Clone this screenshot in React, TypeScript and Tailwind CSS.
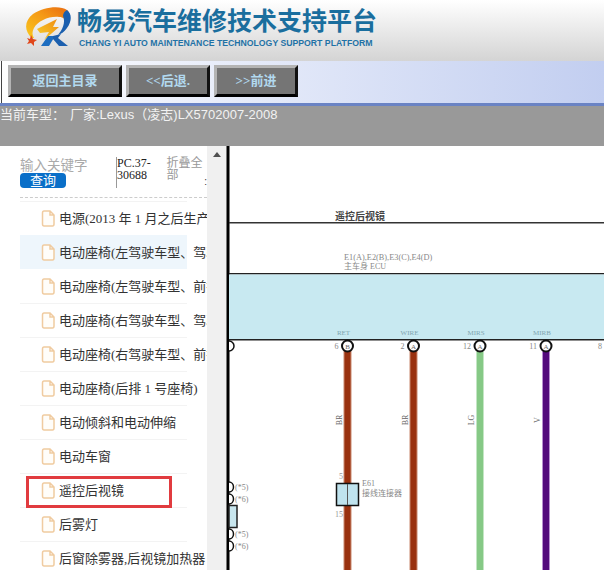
const SERIF = "font-['Liberation_Serif','Noto_Sans_CJK_SC',serif]";
const SANS = "font-['Liberation_Sans','Noto_Sans_CJK_SC',sans-serif]";

const ITEMS = [
  '电源(2013 年 1 月之后生产',
  '电动座椅(左驾驶车型、驾驶员座椅)',
  '电动座椅(左驾驶车型、前排乘客座椅)',
  '电动座椅(右驾驶车型、驾驶员座椅)',
  '电动座椅(右驾驶车型、前排乘客座椅)',
  '电动座椅(后排 1 号座椅)',
  '电动倾斜和电动伸缩',
  '电动车窗',
  '遥控后视镜',
  '后雾灯',
  '后窗除雾器,后视镜加热器',
];

const WIRES = [
  { x: 347.5, color: '#99310f', edge: '#c98a70', label: 'RET', pin: '6', letter: 'B', code: 'BR' },
  { x: 413.5, color: '#99310f', edge: '#c98a70', label: 'WIRE', pin: '2', letter: 'A', code: 'BR' },
  { x: 480, color: '#86c986', edge: '#c4e6c4', label: 'MIRS', pin: '12', letter: 'A', code: 'LG' },
  { x: 546, color: '#530a7c', edge: '#b890d0', label: 'MIRB', pin: '11', letter: 'A', code: 'V' },
];

function Logo() {
  return (
    <svg width="62" height="42" viewBox="0 0 62 42" className="shrink-0">
      <defs>
        <linearGradient id="ring" x1="0" y1="1" x2="1" y2="0">
          <stop offset="0" stopColor="#f9c81e" />
          <stop offset="0.55" stopColor="#f59a16" />
          <stop offset="1" stopColor="#e8690f" />
        </linearGradient>
        <linearGradient id="bolt" x1="0" y1="1" x2="1" y2="0">
          <stop offset="0" stopColor="#f8d22a" />
          <stop offset="1" stopColor="#ef8a12" />
        </linearGradient>
      </defs>
      <path d="M8 31C0 24 0 14 9 7C19 0 36 -2 43 3C48 8 46 16 41 22C43 14 41 10 35 10C25 9 14 14 10 21C8 25 8 28 10 31Z" fill="url(#ring)" />
      <path d="M43 3C48 7 48 14 43 21C40 25 37 27 34 28C38 23 42 16 39 9C39 6 41 4 43 3Z" fill="#1b5fae" />
      <path d="M13 22L33 12L29 20L35 20L20 33L25 25L16 26Z" fill="url(#bolt)" />
      <path d="M7 28L9 32L13 33L10 35L10 39L7 36L3 37L5 34L3 31L6 32Z" fill="#e0471b" />
      <path d="M17 39L24 29L31 29L25 39Z" fill="#1d6dc0" />
      <path d="M29 29L37 27L34 31L44 39H35L29 32Z" fill="#1b5fae" />
    </svg>
  );
}

function Header() {
  return (
    <div className="flex h-[61px] shrink-0 items-start bg-gradient-to-b from-[#ffffff] to-[#d4d4d4] pl-[24px] pt-[7px]">
      <Logo />
      <div className="-ml-[9px] flex flex-col">
        <div className={`h-[28px] whitespace-nowrap text-[25px] leading-[28px] font-bold text-[#1a6e9e] ${SANS}`}>
          畅易汽车维修技术支持平台
        </div>
        <div className={`mt-[3px] ml-[2px] whitespace-nowrap text-[8.7px] leading-[11px] font-bold text-[#1f72a6] ${SANS}`}>
          CHANG YI AUTO MAINTENANCE TECHNOLOGY SUPPORT PLATFORM
        </div>
      </div>
    </div>
  );
}

function NavButton({ label, width }: { label: string; width: string }) {
  return (
    <button
      className={`flex h-[32px] items-center justify-center border-[3px] border-t-[#b4b4b4] border-l-[#b4b4b4] border-r-[#111111] border-b-[#000000] bg-[#757575] text-[13px] font-bold text-[#b2d9ef] ${SERIF} ${width}`}
    >
      {label}
    </button>
  );
}

function Nav() {
  return (
    <div className="relative flex h-[45px] shrink-0 gap-[4px] border-b-[3px] border-[#6a83c4] bg-gradient-to-r from-[#ffffff] to-[#c2cef0] pl-[8px] pt-[4px]">
      <div className="absolute top-0 bottom-0 left-[1px] w-px bg-[#444444]" />
      <NavButton label="返回主目录" width="w-[114px]" />
      <NavButton label="<<后退." width="w-[84px]" />
      <NavButton label=">>前进" width="w-[84px]" />
    </div>
  );
}

function FileIcon() {
  return (
    <svg width="14" height="17" viewBox="0 0 14 17" className="shrink-0">
      <path
        d="M1.5 3C1.5 2 2 1 3 1H9L13 5V14C13 15 12.5 16 11.5 16H3C2 16 1.5 15 1.5 14Z M9 1V5H13"
        fill="#fffdf9"
        stroke="#f0cba0"
        strokeWidth="1.5"
      />
    </svg>
  );
}

function Sidebar() {
  return (
    <div className="relative h-full w-[207px] shrink-0 overflow-hidden bg-white">
      <div className="ml-[20px] flex h-[52px] items-start border-b border-dashed border-[#cccccc] pt-[11px]">
        <div className="w-[97px] pt-[2px]">
          <div className={`text-[13.5px] leading-[14px] text-[#aaaaaa] ${SANS}`}>输入关键字</div>
          <div className={`h-[15px] w-[46px] rounded-[4px] bg-[#0a6fc8] text-center text-[13px] leading-[15px] text-white ${SANS}`}>
            查询
          </div>
        </div>
        <div className={`h-[31px] w-[51px] border-l border-[#999999] text-[12px] leading-[12px] text-[#222222] ${SERIF}`}>
          <div className="w-[38px] break-words">PC.37-30688</div>
        </div>
        <div className={`w-[38px] text-[12px] leading-[12px] text-[#999999] ${SANS}`}>折叠全部</div>
        <span className="mt-[20px] text-[10px] leading-[10px] text-[#333333]">:</span>
      </div>
      <div className="mt-[3px] ml-[20px] w-[167px]">
        {ITEMS.map((item, i) => (
          <div
            key={item}
            className={`flex h-[34px] items-center gap-[4px] pl-[21px] ${i === 1 ? 'bg-[#eef6fc]' : ''} ${
              i === 2 || i === 1 ? 'border-t border-transparent' : 'border-t border-[#f3f3f3]'
            }`}
          >
            <FileIcon />
            <span className={`whitespace-nowrap text-[13px] text-[#333333] ${SERIF}`}>{item}</span>
          </div>
        ))}
      </div>
      <div className="absolute top-[330px] left-[26px] h-[32px] w-[146px] border-[3px] border-[#e13b3f]" />
    </div>
  );
}

function Scrollbar() {
  return (
    <div className="flex h-full w-[19px] shrink-0 justify-center bg-[#f0f0f0] pt-[6px]">
      <div className="h-0 w-0 border-x-[4px] border-b-[5px] border-x-transparent border-b-[#505050]" />
    </div>
  );
}

function Diagram() {
  const text = { fontFamily: "'Liberation Serif','Noto Sans CJK SC',serif" };
  return (
    <svg width="378" height="424" viewBox="226 146 378 424" className="shrink-0 bg-white" style={text}>
      <rect x="226" y="146" width="1" height="424" fill="#777777" />
      <rect x="227" y="146" width="2.5" height="424" fill="#000000" />
      <text x="335" y="220" fontSize="10" fontWeight="bold" fill="#444444">遥控后视镜</text>
      <rect x="229" y="222" width="375" height="1.5" fill="#333333" />
      <text x="344" y="260" fontSize="8.3" fill="#888888">E1(A),E2(B),E3(C),E4(D)</text>
      <text x="344" y="269" fontSize="8" fill="#888888">主车身 ECU</text>
      <rect x="229" y="273" width="375" height="1.5" fill="#222222" />
      <rect x="229" y="274.5" width="375" height="65" fill="#c8e9f1" />
      <rect x="229" y="339" width="375" height="1.5" fill="#222222" />

      {WIRES.map((w) => (
        <g key={w.x}>
          <rect x={w.x - 4} y="351" width="8" height="219" fill={w.edge} />
          <rect x={w.x - 3} y="351" width="6" height="219" fill={w.color} />
          <text x={w.x - 4} y="335" fontSize="7" textAnchor="middle" fill="#7fa5b0">{w.label}</text>
          <text x={w.x - 9} y="349" fontSize="8" textAnchor="end" fill="#888888">{w.pin}</text>
          <circle cx={w.x} cy="346" r="5.5" fill="#ffffff" stroke="#111111" strokeWidth="2" />
          <text x={w.x} y="348.5" fontSize="7" textAnchor="middle" fill="#666666">{w.letter}</text>
          <text
            x={w.x - 6}
            y="420"
            fontSize="8"
            textAnchor="middle"
            fill="#666666"
            transform={`rotate(-90 ${w.x - 6} 420)`}
          >
            {w.code}
          </text>
        </g>
      ))}

      <text x="598" y="349" fontSize="8" fill="#888888">8</text>
      <path d="M229 341A5 5 0 0 1 229 351" fill="#ffffff" stroke="#111111" strokeWidth="1.5" />

      <text x="339" y="479" fontSize="8" fill="#999999">5</text>
      <rect x="336.5" y="483.5" width="22" height="22" fill="#bfe3ee" stroke="#111111" strokeWidth="1.5" />
      <rect x="347" y="484" width="1" height="21" fill="#555555" />
      <text x="335" y="517" fontSize="8" fill="#999999">15</text>
      <text x="362" y="486" fontSize="8" fill="#888888">E61</text>
      <text x="362" y="496" fontSize="8" fill="#888888">接线连接器</text>

      {[487, 499, 534, 546].map((y, i) => (
        <g key={y}>
          <path d={`M229 ${y - 5}A4.5 5 0 0 1 229 ${y + 5}`} fill="#ffffff" stroke="#111111" strokeWidth="1.5" />
          <text x="235" y={y + 2.5} fontSize="8" fill="#888888">{i % 2 === 0 ? '(*5)' : '(*6)'}</text>
        </g>
      ))}
      <rect x="229" y="505.5" width="8" height="22" fill="#c8e6ee" stroke="#222222" strokeWidth="1.5" />
    </svg>
  );
}

export default function App() {
  return (
    <div className={`flex h-[570px] w-[604px] flex-col overflow-hidden bg-white ${SANS}`}>
      <Header />
      <Nav />
      <div className="flex h-[40px] shrink-0 items-start bg-[#999999] text-[13px] leading-[17px] whitespace-nowrap text-[#f2f2f2]">
        <span className="w-[70px]">当前车型：</span>
        <span>厂家:Lexus（凌志)LX5702007-2008</span>
      </div>
      <div className="flex min-h-0 flex-1">
        <Sidebar />
        <Scrollbar />
        <Diagram />
      </div>
    </div>
  );
}
